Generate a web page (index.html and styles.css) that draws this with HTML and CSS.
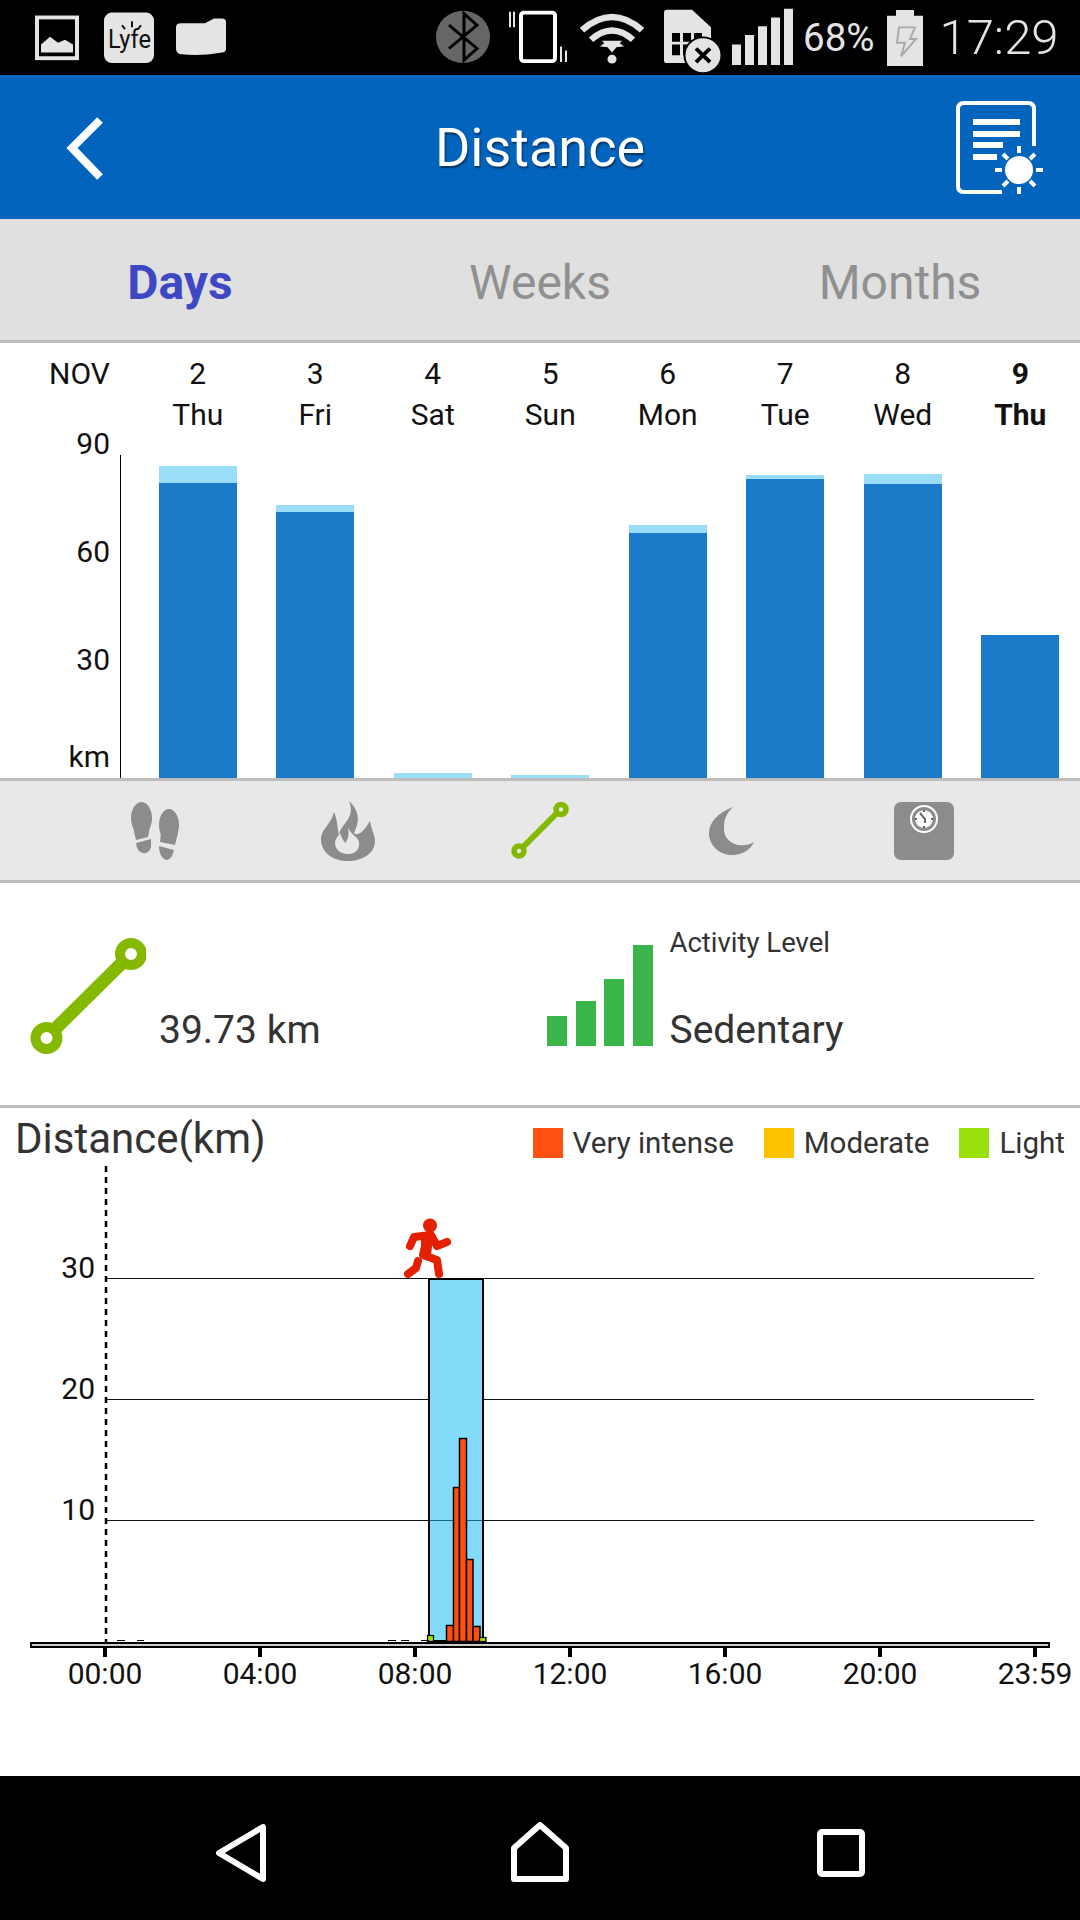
FILE: index.html
```html
<!doctype html>
<html lang="en">
<head>
  <meta charset="utf-8">
  <title>Distance</title>
  <link rel="stylesheet" href="styles.css">
</head>
<body>

<!-- status bar -->
<div class="status">
  <svg class="status-left" width="240" height="75" viewBox="0 0 240 75">
    <g transform="scale(1 0.97)">
      <rect x="37" y="18" width="40" height="42" fill="none" stroke="#e4e4e4" stroke-width="4"/>
      <path d="M41 54 V46 L50 38 L58 44 L65 41 L73 46 V54 Z" fill="#e4e4e4"/>
      <rect x="104" y="13" width="50" height="52" rx="8" fill="#e4e4e4"/>
      <text x="108" y="49" font-family="Roboto, sans-serif" font-size="27" textLength="43" lengthAdjust="spacingAndGlyphs" fill="#111">Lyfe</text>
      <path d="M132 22 v6 M122 26 l3 4 M141 26 l-3 4" stroke="#111" stroke-width="2"/>
      <path d="M176 28 Q176 24 181 24 L205 24 L214 19 L222 19 Q226 19 226 23 L226 50 Q226 54 222 54 Q200 58 182 56 Q176 56 176 50 Z" fill="#e4e4e4"/>
    </g>
  </svg>
  <svg class="status-mid" width="360" height="75" viewBox="436 0 360 75">
    <g transform="scale(1 0.97)">
      <circle cx="463" cy="38" r="27" fill="#666"/>
      <path d="M449 26 L477 50 L464 62 V14 L477 26 L449 50" fill="none" stroke="#000" stroke-width="3"/>
      <path d="M510 12 v16 M514 12 v16" stroke="#e4e4e4" stroke-width="2"/>
      <rect x="521" y="13" width="34" height="50" rx="3" fill="none" stroke="#fff" stroke-width="4"/>
      <path d="M561 48 v16 M566 52 v12" stroke="#e4e4e4" stroke-width="2"/>
      <path d="M582 31 Q612 4 642 31" fill="none" stroke="#e4e4e4" stroke-width="6.500"/>
      <path d="M591 41 Q612 22 633 41" fill="none" stroke="#e4e4e4" stroke-width="6.500"/>
      <path d="M600 48 L606 43 L612 49 Z M624 48 L618 43 L612 49 Z" fill="#e4e4e4"/>
      <path d="M602 42 H622 L612 54 Z" fill="#e4e4e4"/>
      <circle cx="612" cy="61" r="4.500" fill="#e4e4e4"/>
      <path d="M664 13 Q664 10 667 10 H692 L711 28 V62 Q711 65 708 65 H667 Q664 65 664 62 Z" fill="#e4e4e4"/>
      <path d="M672 34 h8 v9 h-8 z M683 34 h8 v9 h-8 z M694 34 h8 v9 h-8 z M672 46 h8 v11 h-8 z M683 46 h8 v11 h-8 z" fill="#000"/>
      <circle cx="703" cy="57" r="18.500" fill="#e4e4e4" stroke="#000" stroke-width="2"/>
      <path d="M696 50 L710 64 M710 50 L696 64" stroke="#000" stroke-width="4"/>
      <path d="M732 46 h9 v21 h-9 z M745 36 h9 v31 h-9 z M758 27 h9 v40 h-9 z M771 18 h9 v49 h-9 z M784 9 h9 v58 h-9 z" fill="#e4e4e4"/>
    </g>
  </svg>
  <span class="status-pct">68%</span>
  <svg class="status-batt" width="36" height="56" viewBox="0 0 36 58" preserveAspectRatio="none">
    <path d="M9 0 H27 V6 H36 V58 H0 V6 H9 Z" fill="#e4e4e4"/>
    <path d="M12 18 H28 L23 30 H29 L14 48 L18 34 H10 Z" fill="none" stroke="#aaa" stroke-width="2"/>
  </svg>
  <span class="status-time">17:29</span>
</div>

<!-- title bar -->
<div class="header">
  <svg class="back" width="40" height="66" viewBox="0 0 40 66">
    <path d="M34 4 L6 32 L34 61" fill="none" stroke="#fff" stroke-width="8"/>
  </svg>
  <h1 class="title">Distance</h1>
  <svg class="report" width="96" height="98" viewBox="956 98 96 98">
    <path d="M1034 146 V109 Q1034 103 1028 103 H964 Q958 103 958 109 V186 Q958 192 964 192 H1002" fill="none" stroke="#fff" stroke-width="4"/>
    <path d="M973 119 h47 v6 h-47 z M973 131 h47 v6 h-47 z M973 142 h30 v6 h-30 z M973 154 h24 v6 h-24 z" fill="#fff"/>
    <circle cx="1019" cy="170" r="14" fill="#fff"/>
    <path d="M1019 146 v7 M1019 187 v7 M995 170 h7 M1036 170 h7 M1003 154 l5 5 M1030 181 l5 5 M1035 154 l-5 5 M1008 181 l-5 5" stroke="#fff" stroke-width="4"/>
  </svg>
</div>

<!-- tabs -->
<div class="tabs">
  <div class="tab active">Days</div>
  <div class="tab">Weeks</div>
  <div class="tab">Months</div>
</div>

<!-- week chart -->
<div class="dates">
  <div class="month">NOV</div>
  <div class="date"><div>2</div><div>Thu</div></div>
  <div class="date"><div>3</div><div>Fri</div></div>
  <div class="date"><div>4</div><div>Sat</div></div>
  <div class="date"><div>5</div><div>Sun</div></div>
  <div class="date"><div>6</div><div>Mon</div></div>
  <div class="date"><div>7</div><div>Tue</div></div>
  <div class="date"><div>8</div><div>Wed</div></div>
  <div class="date today"><div>9</div><div>Thu</div></div>
</div>
<div class="week">
  <div class="yaxis">
    <div class="ticks">
      <div>90</div>
      <div>60</div>
      <div>30</div>
      <div class="unit">km</div>
    </div>
    <div class="axis-line"></div>
  </div>
  <div class="col"><div class="bar-light" style="height:17px"></div><div class="bar-dark" style="height:295px"></div></div>
  <div class="col"><div class="bar-light" style="height:7px"></div><div class="bar-dark" style="height:266px"></div></div>
  <div class="col"><div class="bar-light" style="height:5px"></div></div>
  <div class="col"><div class="bar-light" style="height:3px"></div></div>
  <div class="col"><div class="bar-light" style="height:8px"></div><div class="bar-dark" style="height:245px"></div></div>
  <div class="col"><div class="bar-light" style="height:4px"></div><div class="bar-dark" style="height:299px"></div></div>
  <div class="col"><div class="bar-light" style="height:10px"></div><div class="bar-dark" style="height:294px"></div></div>
  <div class="col"><div class="bar-dark" style="height:143px"></div></div>
</div>

<!-- metric icons -->
<div class="metrics">
  <div class="metric">
    <svg width="50" height="60" viewBox="132 800 50 60">
      <ellipse cx="142.500" cy="817" rx="10.500" ry="16" fill="#8c8c8c"/>
      <path d="M134 826 L151 826 L149 836 L137 839 Z M137 842 L152 838 L152 846 Q150 853 144 852 Q138 851 137 842 Z" fill="#8c8c8c"/>
      <ellipse cx="170" cy="824" rx="10" ry="16" fill="#8c8c8c"/>
      <path d="M162 832 L179 832 L176 844 L161 841 Z M160 845 L175 849 L173 855 Q169 861 165 858 Q160 854 160 845 Z" fill="#8c8c8c"/>
    </svg>
  </div>
  <div class="metric">
    <svg width="54" height="60" viewBox="321 800 54 60">
      <path fill="#8c8c8c" fill-rule="evenodd" d="M349 800 C362 812 358 824 354 832 C358 836 364 830 370 820 C372 830 375 835 375 840 C375 852 363 860 348 860 C333 860 321 852 321 838 C321 828 331 824 334 811 C338 820 337 828 339 834 C341 822 356 818 349 800 Z M348 827 C352 834 358 836 359 841 C360 849 355 853 348 853 C341 853 335 849 335 842 C335 838 338 836 340 832 C342 838 344 840 345 842 C349 838 349 832 348 827 Z"/>
    </svg>
  </div>
  <div class="metric">
    <svg width="58" height="60" viewBox="0 0 58 60">
      <path d="M8 50 L50 8" stroke="#85b900" stroke-width="6"/>
      <circle cx="8" cy="50" r="5" fill="#e8e8e8" stroke="#85b900" stroke-width="5.500"/>
      <circle cx="50" cy="8.500" r="5" fill="#e8e8e8" stroke="#85b900" stroke-width="5.500"/>
    </svg>
  </div>
  <div class="metric">
    <svg width="46" height="50" viewBox="710 805 46 50">
      <path fill="#8c8c8c" d="M734 806 C718 812 710 822 710 832 C710 846 722 854 733 854 C744 854 752 848 755 841 C744 848 724 844 725 826 C725 816 729 811 734 806 Z"/>
    </svg>
  </div>
  <div class="metric">
    <svg width="60" height="60" viewBox="894 800 60 60">
      <rect x="894" y="801" width="60" height="58" rx="7" fill="#8c8c8c"/>
      <circle cx="924" cy="818" r="13" fill="#8c8c8c" stroke="#fff" stroke-width="2"/>
      <circle cx="924" cy="818" r="9" fill="#fff"/>
      <path d="M920 812 L925 818 V822 M924 809 v2 M924 825 v2 M915 818 h2 M931 818 h2" stroke="#666" stroke-width="2" fill="none"/>
    </svg>
  </div>
</div>

<!-- summary -->
<div class="summary">
  <svg class="route-big" width="116" height="116" viewBox="0 0 116 116">
    <path d="M20 96 L97 20" stroke="#85b900" stroke-width="13"/>
    <circle cx="16.500" cy="100" r="11" fill="#fff" stroke="#85b900" stroke-width="10"/>
    <circle cx="101" cy="16" r="11" fill="#fff" stroke="#85b900" stroke-width="10"/>
  </svg>
  <div class="summary-value">39.73 km</div>
  <div class="level-bars">
    <div class="level-bar" style="height:30px"></div>
    <div class="level-bar" style="height:45px"></div>
    <div class="level-bar" style="height:67px"></div>
    <div class="level-bar" style="height:101px"></div>
  </div>
  <div class="level-text">
    <div class="level-label">Activity Level</div>
    <div class="level-value">Sedentary</div>
  </div>
</div>

<!-- day chart -->
<div class="day">
  <div class="day-head">
    <div class="day-title">Distance(km)</div>
    <div class="legend">
      <div class="legend-item"><span class="swatch intense"></span>Very intense</div>
      <div class="legend-item"><span class="swatch moderate"></span>Moderate</div>
      <div class="legend-item"><span class="swatch light"></span>Light</div>
    </div>
  </div>
  <svg class="day-plot" width="1080" height="616" viewBox="0 1160 1080 616">
    <path d="M105 1278.500 H1034 M105 1399.500 H1034 M105 1520.500 H1034" stroke="#111" stroke-width="1"/>
    <rect x="429" y="1279" width="54" height="362" fill="#82dcf9" stroke="#000" stroke-width="2"/>
    <path d="M430 1520.500 H482" stroke="#0a6d88" stroke-width="1"/>
    <g fill="#ff5011" stroke="#000" stroke-width="1.500">
      <rect x="446.500" y="1625.500" width="7" height="16"/>
      <rect x="453.500" y="1487.500" width="6" height="154"/>
      <rect x="459.500" y="1438.500" width="7" height="203"/>
      <rect x="466.500" y="1559.500" width="6.500" height="82"/>
      <rect x="473" y="1626.500" width="7" height="15"/>
    </g>
    <g fill="#9ae00a" stroke="#000" stroke-width="1.200">
      <rect x="427.500" y="1635.500" width="6" height="6"/>
      <rect x="479.500" y="1637.500" width="6.500" height="4"/>
    </g>
    <path d="M117 1640.500 h8 M137 1640.500 h7 M388 1640.500 h8 M401 1640.500 h8 M421 1640.500 h8 M434 1640.500 h7" stroke="#000" stroke-width="1"/>
    <path d="M106 1166 V1642" stroke="#000" stroke-width="2.500" stroke-dasharray="6 5"/>
    <rect x="31" y="1643" width="1018" height="4" fill="#ccc" stroke="#000" stroke-width="2"/>
    <path d="M105 1648 v9 M260 1648 v9 M415 1648 v9 M570 1648 v9 M725 1648 v9 M880 1648 v9 M1035 1648 v9" stroke="#000" stroke-width="4"/>
    <g class="ylab">
      <text x="95" y="1278">30</text>
      <text x="95" y="1399">20</text>
      <text x="95" y="1520">10</text>
    </g>
    <g class="xlab">
      <text x="105" y="1684">00:00</text>
      <text x="260" y="1684">04:00</text>
      <text x="415" y="1684">08:00</text>
      <text x="570" y="1684">12:00</text>
      <text x="725" y="1684">16:00</text>
      <text x="880" y="1684">20:00</text>
      <text x="1035" y="1684">23:59</text>
    </g>
    <!-- runner -->
    <circle cx="430" cy="1225.500" r="7" fill="#e32000"/>
    <g fill="none" stroke="#e32000" stroke-width="8" stroke-linecap="round" stroke-linejoin="round">
      <path d="M410 1246 L414 1237 L431 1235 L437 1246 L447 1242"/>
      <path d="M427 1237 L423 1255 L437 1260 L439 1274"/>
      <path d="M418 1261 L416 1268 L408 1274"/>
    </g>
    <path d="M421 1236 H433 L431 1256 H421 Z" fill="#e32000"/>
  </svg>
</div>

<!-- android nav -->
<div class="nav">
  <svg width="50" height="58" viewBox="0 0 50 58">
    <path d="M47 3 V55 L3 29 Z" fill="none" stroke="#fff" stroke-width="6" stroke-linejoin="round"/>
  </svg>
  <svg width="58" height="60" viewBox="0 0 58 60">
    <path d="M29 3 L55 26 V57 H3 V26 Z" fill="none" stroke="#fff" stroke-width="6" stroke-linejoin="round"/>
  </svg>
  <svg width="48" height="48" viewBox="0 0 48 48">
    <rect x="3" y="3" width="42" height="42" rx="2" fill="none" stroke="#fff" stroke-width="6"/>
  </svg>
</div>

</body>
</html>
```

FILE: styles.css
```css
* {
  box-sizing: border-box;
}

body {
  margin: 0;
  width: 1080px;
  height: 1920px;
  overflow: hidden;
  display: flex;
  flex-direction: column;
  background-color: #fff;
  font-family: Roboto, "Noto Sans", sans-serif;
  color: #111;
}

/* status bar */
.status {
  height: 75px;
  flex: none;
  background-color: #000;
  display: flex;
  align-items: center;
  color: #e4e4e4;
}

.status-left {
  flex: none;
}

.status-mid {
  flex: none;
  margin-left: 196px;
}

.status-pct {
  margin-left: 7px;
  font-size: 38.500px;
}

.status-batt {
  flex: none;
  margin-left: 13px;
}

.status-time {
  margin-left: 16px;
  font-size: 49px;
  font-weight: 300;
}

/* title bar */
.header {
  height: 144px;
  flex: none;
  background-color: #0264bc;
  display: flex;
  align-items: center;
  position: relative;
}

.back {
  position: absolute;
  left: 66px;
  top: 41px;
}

.title {
  margin: 0;
  width: 100%;
  text-align: center;
  color: #fff;
  font-size: 54px;
  font-weight: 400;
  text-shadow: 1px 2px 2px rgba(0, 0, 0, 0.5);
}

.report {
  position: absolute;
  left: 956px;
  top: 23px;
}

/* tabs */
.tabs {
  height: 124px;
  flex: none;
  display: flex;
  background-color: #e0e0e0;
  border-bottom: 3px solid #bdbdbd;
}

.tab {
  flex: 1;
  display: flex;
  align-items: center;
  justify-content: center;
  padding-top: 6px;
  font-size: 48px;
  color: #909090;
}

.tab.active {
  font-weight: 700;
  color: #3f48c4;
}

/* week chart */
.dates {
  height: 87px;
  flex: none;
  display: grid;
  grid-template-columns: 139px repeat(8, 1fr);
  padding: 10px 1px 0 0;
  font-size: 30px;
  line-height: 41px;
}

.month {
  padding-left: 49px;
}

.date {
  text-align: center;
}

.date.today {
  font-weight: 700;
}

.week {
  height: 348px;
  flex: none;
  display: grid;
  grid-template-columns: 139px repeat(8, 1fr);
  padding-right: 1px;
}

.yaxis {
  display: flex;
  align-items: flex-end;
  height: 348px;
}

.ticks {
  width: 110px;
  height: 348px;
  display: flex;
  flex-direction: column;
  gap: 80px;
  text-align: right;
  font-size: 30px;
  line-height: 28px;
}

.ticks .unit {
  margin-top: -11px;
}

.axis-line {
  width: 1px;
  height: 323px;
  margin-left: 10px;
  background-color: #000;
}

.col {
  display: flex;
  flex-direction: column;
  justify-content: flex-end;
  align-items: center;
}

.bar-light,
.bar-dark {
  width: 78px;
}

.bar-light {
  background-color: #9bddf9;
}

.bar-dark {
  background-color: #1c7bc8;
}

/* metric icons */
.metrics {
  height: 105px;
  flex: none;
  display: flex;
  padding: 0 60px;
  background-color: #e8e8e8;
  border-top: 3px solid #bdbdbd;
  border-bottom: 3px solid #bdbdbd;
}

.metric {
  width: 192px;
  display: flex;
  align-items: center;
  justify-content: center;
}

.metric svg {
  display: block;
}

/* summary */
.summary {
  height: 225px;
  flex: none;
  border-bottom: 3px solid #bdbdbd;
  display: flex;
  align-items: flex-end;
  padding: 0 0 49px 30px;
  color: #333;
}

.route-big {
  flex: none;
  margin-bottom: 2px;
}

.summary-value {
  margin-left: 13px;
  width: 388px;
  font-size: 39px;
  line-height: 44px;
  margin-bottom: 4px;
}

.level-bars {
  flex: none;
  display: flex;
  align-items: flex-end;
  gap: 8.500px;
  height: 101px;
  margin-bottom: 10px;
}

.level-bar {
  width: 20px;
  background-color: #39b54a;
}

.level-text {
  margin-left: 17px;
  height: 125px;
  margin-bottom: 4px;
  display: flex;
  flex-direction: column;
  justify-content: space-between;
}

.level-label {
  font-size: 27.500px;
  line-height: 32px;
}

.level-value {
  font-size: 39px;
  line-height: 44px;
}

/* day chart */
.day {
  flex: 1;
  display: flex;
  flex-direction: column;
}

.day-head {
  height: 52px;
  flex: none;
  display: flex;
  justify-content: space-between;
  align-items: center;
  padding: 8px 15px 0 15px;
  color: #333;
}

.day-title {
  font-size: 42px;
}

.legend {
  display: flex;
  gap: 30px;
  font-size: 29.500px;
  margin-top: 9px;
}

.legend-item {
  display: flex;
  align-items: center;
  gap: 10px;
}

.swatch {
  width: 30px;
  height: 30px;
}

.swatch.intense {
  background-color: #ff5011;
}

.swatch.moderate {
  background-color: #fdc300;
}

.swatch.light {
  background-color: #9ae00a;
}

.day-plot {
  display: block;
}

.day-plot text {
  font-family: Roboto, sans-serif;
  font-size: 30px;
  fill: #111;
}

.ylab text {
  text-anchor: end;
}

.xlab text {
  text-anchor: middle;
}

/* android nav */
.nav {
  height: 144px;
  flex: none;
  background-color: #000;
  display: flex;
  align-items: center;
  position: relative;
}

.nav svg {
  position: absolute;
}

.nav svg:nth-child(1) {
  left: 216px;
  top: 48px;
}

.nav svg:nth-child(2) {
  left: 511px;
  top: 46px;
}

.nav svg:nth-child(3) {
  left: 817px;
  top: 53px;
}
```
